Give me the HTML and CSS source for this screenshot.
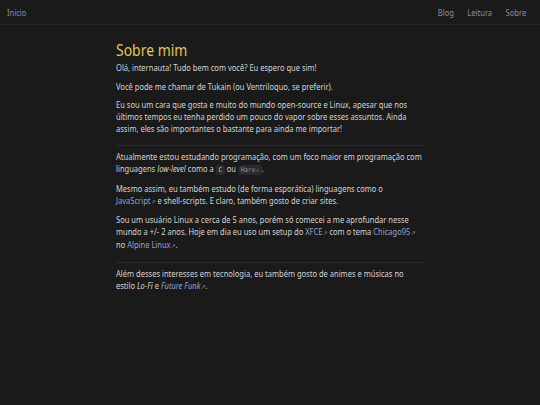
FILE: index.html
```html
<!DOCTYPE html>
<html lang="pt-BR">
<head>
    <meta charset="UTF-8">
    <meta name="viewport" content="width=device-width, initial-scale=1.0">
    <title>Sobre mim</title>
    <link rel="stylesheet" href="styles.css">
</head>
<body>

<header class="topbar">
    <a href="#" class="nav-link home">Inicio</a>
    <nav class="nav">
        <a href="#" class="nav-link">Blog</a>
        <a href="#" class="nav-link">Leitura</a>
        <a href="#" class="nav-link">Sobre</a>
    </nav>
</header>

<main class="content">
    <h1>Sobre mim</h1>
    <p>Olá, internauta! Tudo bem com você? Eu espero que sim!</p>
    <p>Você pode me chamar de Tukain (ou Ventriloquo, se preferir).</p>
    <p>Eu sou um cara que gosta e muito do mundo open-source e Linux, apesar que nos últimos tempos eu tenha perdido um pouco do vapor sobre esses assuntos. Ainda assim, eles são importantes o bastante para ainda me importar!</p>

    <hr>

    <p>Atualmente estou estudando programação, com um foco maior em programação com linguagens <em>low-level</em> como a <code>C</code> ou <code><a href="#" class="ext">Hare</a></code>.</p>
    <p>Mesmo assim, eu também estudo (de forma esporática) linguagens como o <a href="#" class="ext">JavaScript</a> e shell-scripts. E claro, também gosto de criar sites.</p>
    <p>Sou um usuário Linux a cerca de 5 anos, porém só comecei a me aprofundar nesse mundo a +/- 2 anos. Hoje em dia eu uso um setup do <a href="#" class="ext">XFCE</a> com o tema <a href="#" class="ext">Chicago95</a> no <a href="#" class="ext">Alpine Linux</a>.</p>

    <hr>

    <p>Além desses interesses em tecnologia, eu também gosto de animes e músicas no estilo <em>Lo-Fi</em> e <a href="#" class="ext"><em>Future Funk</em></a>.</p>
</main>

</body>
</html>
```

FILE: styles.css
```css
html, body {
    margin: 0;
    padding: 0;
    background-color: #1a1a1a;
}
body {
    font-family: "Noto Sans", "Open Sans", sans-serif;
    color: #d4d4d4;
}

/* the shot is a bit squeezed sideways, text gets a narrower scale */
.topbar {
    display: flex;
    align-items: center;
    justify-content: space-between;
    height: 24px;
    padding: 0 14px 0 7px;
    border-bottom: 1px solid #242424;
    font-size: 8.4px;
}
.home {
    transform: scaleX(0.9);
    transform-origin: left center;
}
.nav {
    display: flex;
    gap: 15px;
    transform: scaleX(0.9);
    transform-origin: right center;
}
.nav-link {
    display: inline-block;
    color: #8a8fa0;
    text-decoration: none;
}

.content {
    width: 342px;
    margin-left: calc(50% - 154px);
    padding-top: 15px;
    font-size: 8.4px;
    line-height: 12px;
    transform: scaleX(0.9);
    transform-origin: left top;
}
h1 {
    margin: 0 0 2px;
    font-size: 15.5px;
    line-height: 20px;
    font-weight: normal;
    color: #e4c64c;
}
p {
    margin: 0 0 6.5px;
}
hr {
    border: none;
    border-top: 1px solid #2a2a2a;
    margin: 10px 0 5px;
}
em {
    font-style: italic;
}
a {
    color: #95a3cc;
    text-decoration: none;
}
.ext::after {
    content: "\2197";
    font-size: 5.5px;
    font-style: normal;
    margin-left: 0.5px;
}
code {
    font-family: "DejaVu Sans Mono", "Liberation Mono", monospace;
    font-size: 6.8px;
    background-color: #2b2b2b;
    border-radius: 2px;
    padding: 1px 3px;
}
code a {
    color: #8a8fa0;
}
```
